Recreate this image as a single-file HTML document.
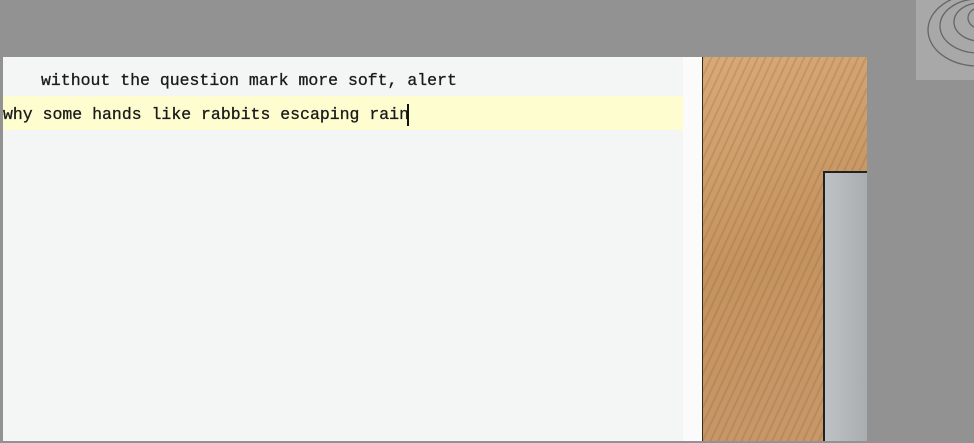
<!DOCTYPE html>
<html><head><style>
body{margin:0;width:974px;height:443px;background:#929292;position:relative;overflow:hidden;font-family:"Liberation Mono",monospace;}
.ed{position:absolute;left:3px;top:57px;width:680px;height:384px;background:#f4f6f5;}
.strip{position:absolute;left:683px;top:57px;width:19px;height:384px;background:#fbfbfb;}
.wood{position:absolute;left:702px;top:57px;width:165px;height:384px;background:repeating-linear-gradient(115deg,rgba(120,80,40,.18) 0 2px,rgba(0,0,0,0) 2px 7px),linear-gradient(160deg,#d9aa78,#c4935f 50%,#c8986a);border-left:1px solid #3a2a1a;box-sizing:border-box;}
.gbox{position:absolute;left:823px;top:171px;width:44px;height:270px;background:linear-gradient(90deg,#bfc2c5,#a9adb0);border-left:2px solid #222;border-top:2px solid #222;box-sizing:border-box;}
.tr{position:absolute;left:916px;top:0;width:58px;height:80px;background:#a8a8a8;}
.hl{position:absolute;left:3px;top:96px;width:680px;height:34px;background:#fefdd0;}
.t{position:absolute;font-size:16.5px;color:#1a1a1a;white-space:pre;line-height:20px;-webkit-text-stroke:0.3px #1a1a1a;}
.cur{position:absolute;left:407px;top:104px;width:1.5px;height:22px;background:#111;}
</style></head><body>
<div class="ed"></div><div class="strip"></div>
<div class="hl"></div>
<div class="t" style="left:41px;top:71px">without the question mark more soft, alert</div>
<div class="t" style="left:3px;top:105px">why some hands like rabbits escaping rain</div>
<div class="cur"></div>
<div class="wood"></div><div class="gbox"></div>
<div class="tr"><svg width="58" height="80"><g fill="none" stroke="#666" stroke-width="1.3"><ellipse cx="62" cy="30" rx="50" ry="36"/><ellipse cx="62" cy="26" rx="38" ry="27"/><ellipse cx="64" cy="22" rx="26" ry="19"/><ellipse cx="66" cy="18" rx="14" ry="11"/></g></svg></div>
</body></html>
